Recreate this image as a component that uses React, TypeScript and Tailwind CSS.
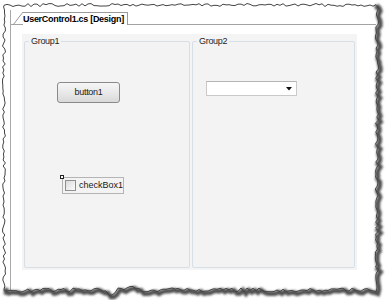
import React from 'react';

// deterministic jitter so the torn edge looks the same on every run
function makeRand(seed: number) {
  let s = seed;
  return () => {
    s = (s * 1103515245 + 12345) % 2147483648;
    return s / 2147483648;
  };
}

function tornPoints() {
  const r = makeRand(7);
  const pts: [number, number][] = [];
  for (let x = 4; x <= 376; x += 3) pts.push([x, 5 + (r() - 0.5) * 3]);
  for (let y = 6; y <= 289; y += 3) pts.push([377 + (r() - 0.5) * 3.5, y]);
  for (let x = 376; x >= 4; x -= 3) {
    const bump = x > 108 && x < 118 ? 4 : x > 120 && x < 140 ? -2 : 0;
    pts.push([x, 290 + bump + (r() - 0.5) * 4]);
  }
  for (let y = 289; y >= 6; y -= 3) pts.push([4 + (r() - 0.5) * 3, y]);
  return pts;
}

function TornEdge() {
  const pts = tornPoints();
  const poly = 'M' + pts.map(([x, y]) => `${x.toFixed(1)} ${y.toFixed(1)}`).join('L') + 'Z';
  const shadow = pts
    .filter(([x, y]) => x > 370 || y > 284)
    .map(([x, y]) => `${(x + 2).toFixed(1)},${(y + 2).toFixed(1)}`)
    .join(' ');
  return (
    <svg className="absolute inset-0 pointer-events-none" width="385" height="300" viewBox="0 0 385 300">
      <defs>
        <filter id="blur" x="-10%" y="-10%" width="120%" height="120%">
          <feGaussianBlur stdDeviation="1.3" />
        </filter>
      </defs>
      <path d={'M0 0H385V300H0Z' + poly} fill="#ffffff" fillRule="evenodd" />
      <polyline points={shadow} fill="none" stroke="#4f4f4f" strokeWidth="4.5" filter="url(#blur)" />
      <path d={poly} fill="none" stroke="#444" strokeWidth="1" />
    </svg>
  );
}

function Group({ title, width, children }: { title: string; width: string; children?: React.ReactNode }) {
  return (
    <fieldset className={`${width} h-[232px] border border-[#d6dfe6] rounded-[2px] m-0 p-0 min-w-0 bg-[#f3f3f3]`}>
      <legend className="ml-[4px] px-[2px] h-[10px] leading-[10px] text-[9px] tracking-[-0.3px] text-[#1e1e1e]">
        {title}
      </legend>
      <div className="flex flex-col items-start">{children}</div>
    </fieldset>
  );
}

export default function App() {
  return (
    <div className="relative w-[385px] h-[300px] bg-white overflow-hidden font-['Liberation_Sans',Arial,sans-serif]">
      <div className="pl-[10px] pt-[10px] h-full">
        <div className="border-l border-[#a9a9a9] h-full">
          {/* document tab strip */}
          <div className="h-[15px] flex items-end border-b border-[#a3a3a3] mr-[9px]">
            <div className="ml-[2px] -mb-px flex items-end h-[13px]">
              <svg width="10" height="13" viewBox="0 0 10 13">
                <path d="M0 13 L10 0" stroke="#9a9a9a" strokeWidth="1" />
              </svg>
              <div className="h-[13px] pr-[3px] border-t border-r border-[#9a9a9a] bg-white text-[9px] leading-[12px] font-bold tracking-[-0.3px] text-black">
                UserControl1.cs [Design]
              </div>
            </div>
          </div>

          {/* design surface */}
          <div className="pt-[9px] pl-[11px]">
            <div className="w-[335px] h-[236px] bg-[#f4f4f4] p-[2px] flex gap-[2px]">
              <Group title="Group1" width="w-[166px]">
                <button className="mt-[36px] ml-[32px] w-[63px] h-[21px] border border-[#8a8a8a] rounded-[3px] bg-gradient-to-b from-[#f6f6f6] via-[#e9e9e9] to-[#d9d9d9] text-[9px] tracking-[-0.3px] text-[#1a1a1a] flex items-center justify-center">
                  button1
                </button>
                <div className="relative mt-[74px] ml-[37px] w-[62px] h-[17px] border border-[#b4b4b4] flex items-center pl-[2px] gap-[3px]">
                  <span className="absolute -left-[3px] -top-[3px] w-[4px] h-[4px] border border-[#222] bg-white" />
                  <span className="w-[11px] h-[11px] border border-[#8e8f8f] bg-gradient-to-br from-[#dcdcdc] to-[#fbfbfb]" />
                  <span className="text-[9px] text-[#1a1a1a]">checkBox1</span>
                </div>
              </Group>
              <Group title="Group2" width="w-[163px]">
                <div className="mt-[35px] ml-[13px] w-[91px] h-[15px] border border-[#c9c9c9] border-t-[#b5b5b5] bg-white flex items-center justify-end pr-[4px]">
                  <svg width="6" height="4" viewBox="0 0 6 4">
                    <path d="M0 0H6L3 3.5Z" fill="#111" />
                  </svg>
                </div>
              </Group>
            </div>
          </div>
        </div>
      </div>
      <TornEdge />
    </div>
  );
}
